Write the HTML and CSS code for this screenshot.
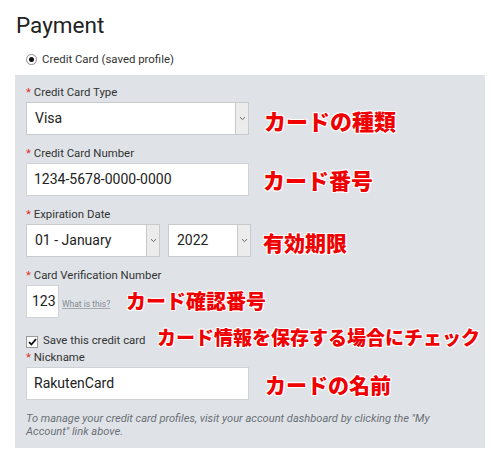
FILE: index.html
```html
<!DOCTYPE html>
<html lang="ja">
<head>
<meta charset="utf-8">
<title>Payment</title>
<link rel="stylesheet" href="styles.css">
</head>
<body>
<div class="page">
  <h1 class="title">Payment</h1>
  <div class="radio-row">
    <span class="radio"><span class="radio-dot"></span></span>
    <span class="radio-label">Credit Card (saved profile)</span>
  </div>
  <div class="panel">
    <div class="field">
      <div class="label"><span class="req">*</span> Credit Card Type</div>
      <div class="select wide"><span class="select-text">Visa</span><span class="select-btn"><svg width="7" height="5" viewBox="0 0 7 5"><path d="M1 1.2 L3.5 3.6 L6 1.2" fill="none" stroke="#666" stroke-width="1"/></svg></span></div>
    </div>
    <div class="field">
      <div class="label"><span class="req">*</span> Credit Card Number</div>
      <div class="input wide">1234-5678-0000-0000</div>
    </div>
    <div class="field">
      <div class="label"><span class="req">*</span> Expiration Date</div>
      <div class="date-row">
        <div class="select month"><span class="select-text">01 - January</span><span class="select-btn"><svg width="7" height="5" viewBox="0 0 7 5"><path d="M1 1.2 L3.5 3.6 L6 1.2" fill="none" stroke="#666" stroke-width="1"/></svg></span></div>
        <div class="select year"><span class="select-text">2022</span><span class="select-btn"><svg width="7" height="5" viewBox="0 0 7 5"><path d="M1 1.2 L3.5 3.6 L6 1.2" fill="none" stroke="#666" stroke-width="1"/></svg></span></div>
      </div>
    </div>
    <div class="field">
      <div class="label"><span class="req">*</span> Card Verification Number</div>
      <div class="cvv-row">
        <div class="input cvv">123</div>
        <a class="help" href="#">What is this?</a>
      </div>
    </div>
    <div class="check-row">
      <span class="checkbox"><svg width="9" height="8" viewBox="0 0 9 8"><path d="M1 4.2 L3.4 6.5 L8 1.2" fill="none" stroke="#111" stroke-width="1.8"/></svg></span>
      <span class="check-label">Save this credit card</span>
    </div>
    <div class="field">
      <div class="label"><span class="req">*</span> Nickname</div>
      <div class="input wide">RakutenCard</div>
    </div>
    <p class="note">To manage your credit card profiles, visit your account dashboard by clicking the "My Account" link above.</p>
  </div>

  <div class="note-jp n1">カードの種類</div>
  <div class="note-jp n2">カード番号</div>
  <div class="note-jp n3">有効期限</div>
  <div class="note-jp n4">カード確認番号</div>
  <div class="note-jp n5">カード情報を保存する場合にチェック</div>
  <div class="note-jp n6">カードの名前</div>
</div>
</body>
</html>
```

FILE: styles.css
```css
html, body {
  margin: 0;
  padding: 0;
  background: #ffffff;
}

.page {
  position: relative;
  width: 499px;
  height: 462px;
  padding-left: 15px;
  box-sizing: border-box;
  font-family: Roboto, "Liberation Sans", sans-serif;
  color: #333;
}

.title {
  margin: 0;
  padding: 11px 0 0 1px;
  font-size: 22.5px;
  line-height: 28px;
  font-weight: 400;
  color: #222;
}

.radio-row {
  display: flex;
  align-items: center;
  height: 22px;
  margin-top: 9px;
  padding-left: 11px;
  margin-bottom: 5px;
}

.radio {
  width: 9px;
  height: 9px;
  border: 1px solid #999;
  border-radius: 50%;
  background: #fff;
  display: flex;
  align-items: center;
  justify-content: center;
  box-shadow: 0 0 1px #ccc;
}

.radio-dot {
  width: 5px;
  height: 5px;
  border-radius: 50%;
  background: #111;
}

.radio-label {
  margin-left: 5px;
  font-size: 11.4px;
  color: #333;
}

.panel {
  width: 470px;
  height: 373px;
  box-sizing: border-box;
  background: #dfe3e8;
  padding: 10px 11px 10px 11px;
}

.field {
  margin-bottom: 11px;
}

.label {
  font-size: 11.4px;
  line-height: 15px;
  height: 15px;
  margin-bottom: 2px;
  color: #333;
}

.req {
  color: #e0302a;
}

.input {
  height: 33px;
  box-sizing: border-box;
  background: #fff;
  border: 1px solid #d0d3d6;
  font-size: 14px;
  line-height: 31px;
  padding-left: 7px;
  color: #222;
}

.wide {
  width: 223px;
}

.select {
  display: flex;
  height: 33px;
  box-sizing: border-box;
  background: #fff;
  border: 1px solid #c8cbce;
}

.select-text {
  flex: 1;
  font-size: 14px;
  line-height: 31px;
  padding-left: 8px;
  color: #222;
}

.select-btn {
  width: 12px;
  border-left: 1px solid #c8c8c8;
  background: #ececec;
  display: flex;
  align-items: center;
  justify-content: center;
}

.date-row {
  display: flex;
  gap: 8px;
}

.month {
  width: 134px;
}

.year {
  width: 83px;
}

.cvv-row {
  display: flex;
  align-items: center;
}

.cvv {
  width: 33px;
  padding-left: 5px;
}

.help {
  margin-left: 3px;
  margin-top: 5px;
  font-size: 8.5px;
  color: #868b92;
  text-decoration: underline;
  text-decoration-color: #a6aab0;
}

.check-row {
  display: flex;
  align-items: center;
  height: 14px;
  margin-top: 15px;
  margin-bottom: 3px;
}

.checkbox {
  width: 10px;
  height: 10px;
  border: 1px solid #999;
  background: #fff;
  display: flex;
  align-items: center;
  justify-content: center;
  margin-top: 4px;
}

.check-label {
  margin-left: 5px;
  font-size: 11.4px;
  color: #333;
}

.note {
  margin: 12px 0 0 0;
  width: 425px;
  font-size: 11.1px;
  line-height: 13px;
  font-style: italic;
  color: #6b6f74;
}

.note-jp {
  position: absolute;
  font-family: "Noto Sans CJK JP", sans-serif;
  font-weight: 900;
  line-height: 1;
  color: #f00000;
  white-space: nowrap;
  text-shadow: 1px 1px 0 #fff, -1px -1px 0 #fff, 1px -1px 0 #fff, -1px 1px 0 #fff, 0 1px 0 #fff, 1px 0 0 #fff, 0 -1px 0 #fff, -1px 0 0 #fff;
}

.n1 { left: 264px; top: 109px; font-size: 22px; }
.n2 { left: 263px; top: 168px; font-size: 22px; }
.n3 { left: 263px; top: 232px; font-size: 21px; }
.n4 { left: 126px; top: 291px; font-size: 20px; }
.n5 { left: 157px; top: 327px; font-size: 19px; }
.n6 { left: 265px; top: 374px; font-size: 21px; }
```
